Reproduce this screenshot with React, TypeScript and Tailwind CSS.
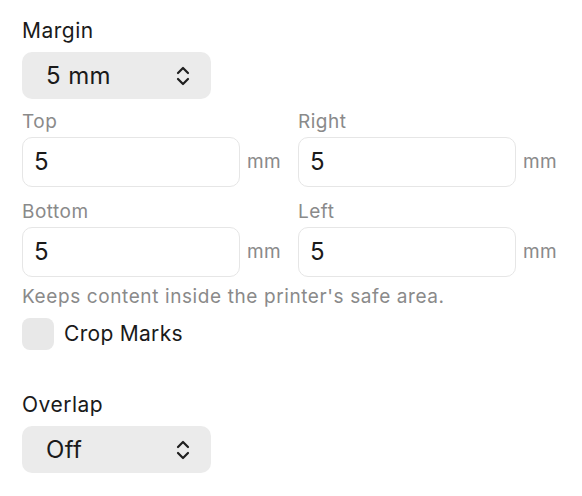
import React from "react";

const font = { fontFamily: "Inter, 'Noto Sans', sans-serif" };

function Chevrons() {
  return (
    <svg width="14" height="22" viewBox="0 0 14 22" fill="none" stroke="#1f1f1f" strokeWidth="2.2" strokeLinecap="round" strokeLinejoin="round">
      <path d="M2 8 L7 3 L12 8" />
      <path d="M2 14 L7 19 L12 14" />
    </svg>
  );
}

function Select({ value }: { value: string }) {
  return (
    <div className="flex h-[47px] w-[189px] items-center justify-between rounded-[10px] bg-[#ebebeb] pl-[24px] pr-[21px]">
      <span className="text-[24px] leading-none tracking-[0.4px] text-[#1a1a1a]">{value}</span>
      <Chevrons />
    </div>
  );
}

function Field({ label, value }: { label: string; value: string }) {
  return (
    <div className="flex w-[276px] flex-col">
      <div className="h-[22px] text-[19px] leading-[22px] tracking-[0.5px] text-[#8a8a8a]">{label}</div>
      <div className="mt-[4px] flex items-center">
        <div className="flex h-[50px] w-[218px] items-center rounded-[10px] border border-[#e6e6e6] bg-white pl-[11px]">
          <span className="text-[24px] leading-none text-[#1a1a1a]">{value}</span>
        </div>
        <span className="ml-[7px] text-[19px] tracking-[0.3px] text-[#8a8a8a]">mm</span>
      </div>
    </div>
  );
}

export default function App() {
  return (
    <div className="h-[496px] w-[582px] bg-white pl-[22px] pt-[19px]" style={font}>
      <div className="h-[24px] text-[21px] leading-[24px] tracking-[0.5px] text-[#1a1a1a]">Margin</div>
      <div className="mt-[9px]">
        <Select value="5 mm" />
      </div>
      <div className="mt-[12px] flex">
        <Field label="Top" value="5" />
        <Field label="Right" value="5" />
      </div>
      <div className="mt-[14px] flex">
        <Field label="Bottom" value="5" />
        <Field label="Left" value="5" />
      </div>
      <div className="mt-[9px] h-[22px] text-[19px] leading-[22px] tracking-[0.6px] text-[#8a8a8a]">
        Keeps content inside the printer's safe area.
      </div>
      <div className="mt-[10px] flex items-center">
        <div className="h-[32px] w-[32px] rounded-[8px] bg-[#e8e8e8]" />
        <span className="ml-[10px] text-[21px] tracking-[0.3px] text-[#1a1a1a]">Crop Marks</span>
      </div>
      <div className="mt-[43px] h-[24px] text-[21px] leading-[24px] tracking-[0.5px] text-[#1a1a1a]">Overlap</div>
      <div className="mt-[9px]">
        <Select value="Off" />
      </div>
    </div>
  );
}
